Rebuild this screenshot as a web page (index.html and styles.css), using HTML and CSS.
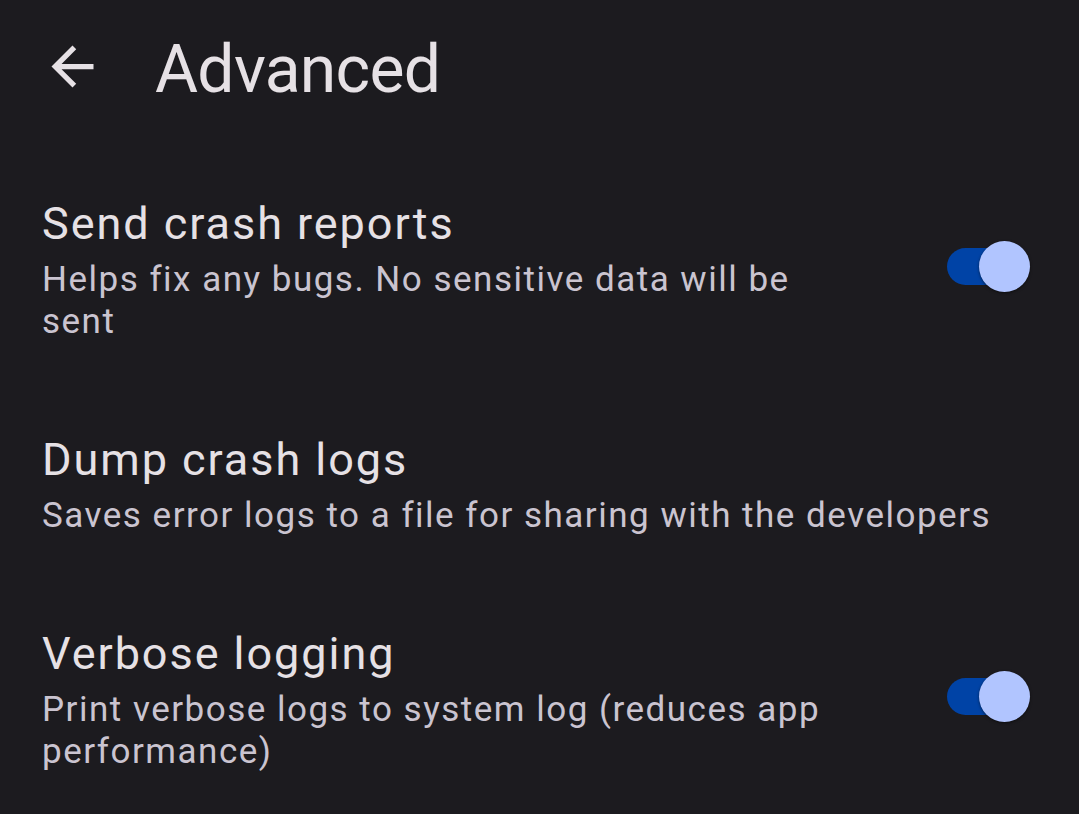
FILE: index.html
```html
<!DOCTYPE html>
<html lang="en">
<head>
    <meta charset="UTF-8">
    <meta name="viewport" content="width=device-width, initial-scale=1.0">
    <title>Advanced</title>
    <link rel="stylesheet" href="styles.css">
</head>
<body>
    <div class="toolbar">
        <button class="back-button" aria-label="Back">
            <svg viewBox="0 0 24 24" width="63" height="63">
                <path d="M20 11H7.83l5.59-5.59L12 4l-8 8 8 8 1.41-1.41L7.83 13H20v-2z" fill="currentColor"/>
            </svg>
        </button>
        <h1 class="toolbar-title">Advanced</h1>
    </div>

    <div class="pref-list">
        <div class="pref">
            <div class="pref-text">
                <div class="pref-title">Send crash reports</div>
                <div class="pref-summary">Helps fix any bugs. No sensitive data will be sent</div>
            </div>
            <div class="switch on">
                <span class="switch-track"></span>
                <span class="switch-thumb"></span>
            </div>
        </div>

        <div class="pref">
            <div class="pref-text wide">
                <div class="pref-title">Dump crash logs</div>
                <div class="pref-summary">Saves error logs to a file for sharing with the developers</div>
            </div>
        </div>

        <div class="pref">
            <div class="pref-text">
                <div class="pref-title">Verbose logging</div>
                <div class="pref-summary">Print verbose logs to system log (reduces app performance)</div>
            </div>
            <div class="switch on">
                <span class="switch-track"></span>
                <span class="switch-thumb"></span>
            </div>
        </div>
    </div>
</body>
</html>
```

FILE: styles.css
```css
body {
    margin: 0;
    background-color: #1c1b1f;
    font-family: Roboto, "Noto Sans", sans-serif;
    color: #e6e1e5;
}

.toolbar {
    display: flex;
    align-items: flex-start;
    height: 152px;
    padding-left: 41px;
    box-sizing: border-box;
}

.back-button {
    margin-top: 35px;
    width: 63px;
    height: 63px;
    padding: 0;
    border: none;
    background: none;
    color: #e6e1e5;
}

.back-button svg {
    display: block;
}

.toolbar-title {
    margin: 31px 0 0 51px;
    font-size: 66px;
    font-weight: 400;
    line-height: 77px;
    letter-spacing: -0.7px;
    color: #e6e1e5;
}

.pref {
    display: flex;
    align-items: center;
    padding: 45px 49px 45px 42px;
}

.pref-text {
    flex: 1;
    margin-right: 107px;
}

.pref-text.wide {
    margin-right: 0;
}

.pref-title {
    font-size: 45px;
    line-height: 53px;
    letter-spacing: 1.95px;
    color: #e6e1e5;
    margin-bottom: 9px;
}

.pref-summary {
    font-size: 35px;
    line-height: 42px;
    letter-spacing: 1.5px;
    color: #cac4d0;
}

.switch {
    position: relative;
    width: 83px;
    height: 51px;
    margin-bottom: 7px;
    flex-shrink: 0;
}

.switch-track {
    position: absolute;
    left: 0;
    top: 7px;
    width: 72px;
    height: 37px;
    border-radius: 19px;
    background-color: #0043a6;
}

.switch-thumb {
    position: absolute;
    left: 32px;
    top: 0;
    width: 51px;
    height: 51px;
    border-radius: 50%;
    background-color: #b1c5ff;
    box-shadow: 0 1px 3px rgba(0, 0, 0, 0.5);
}
```
